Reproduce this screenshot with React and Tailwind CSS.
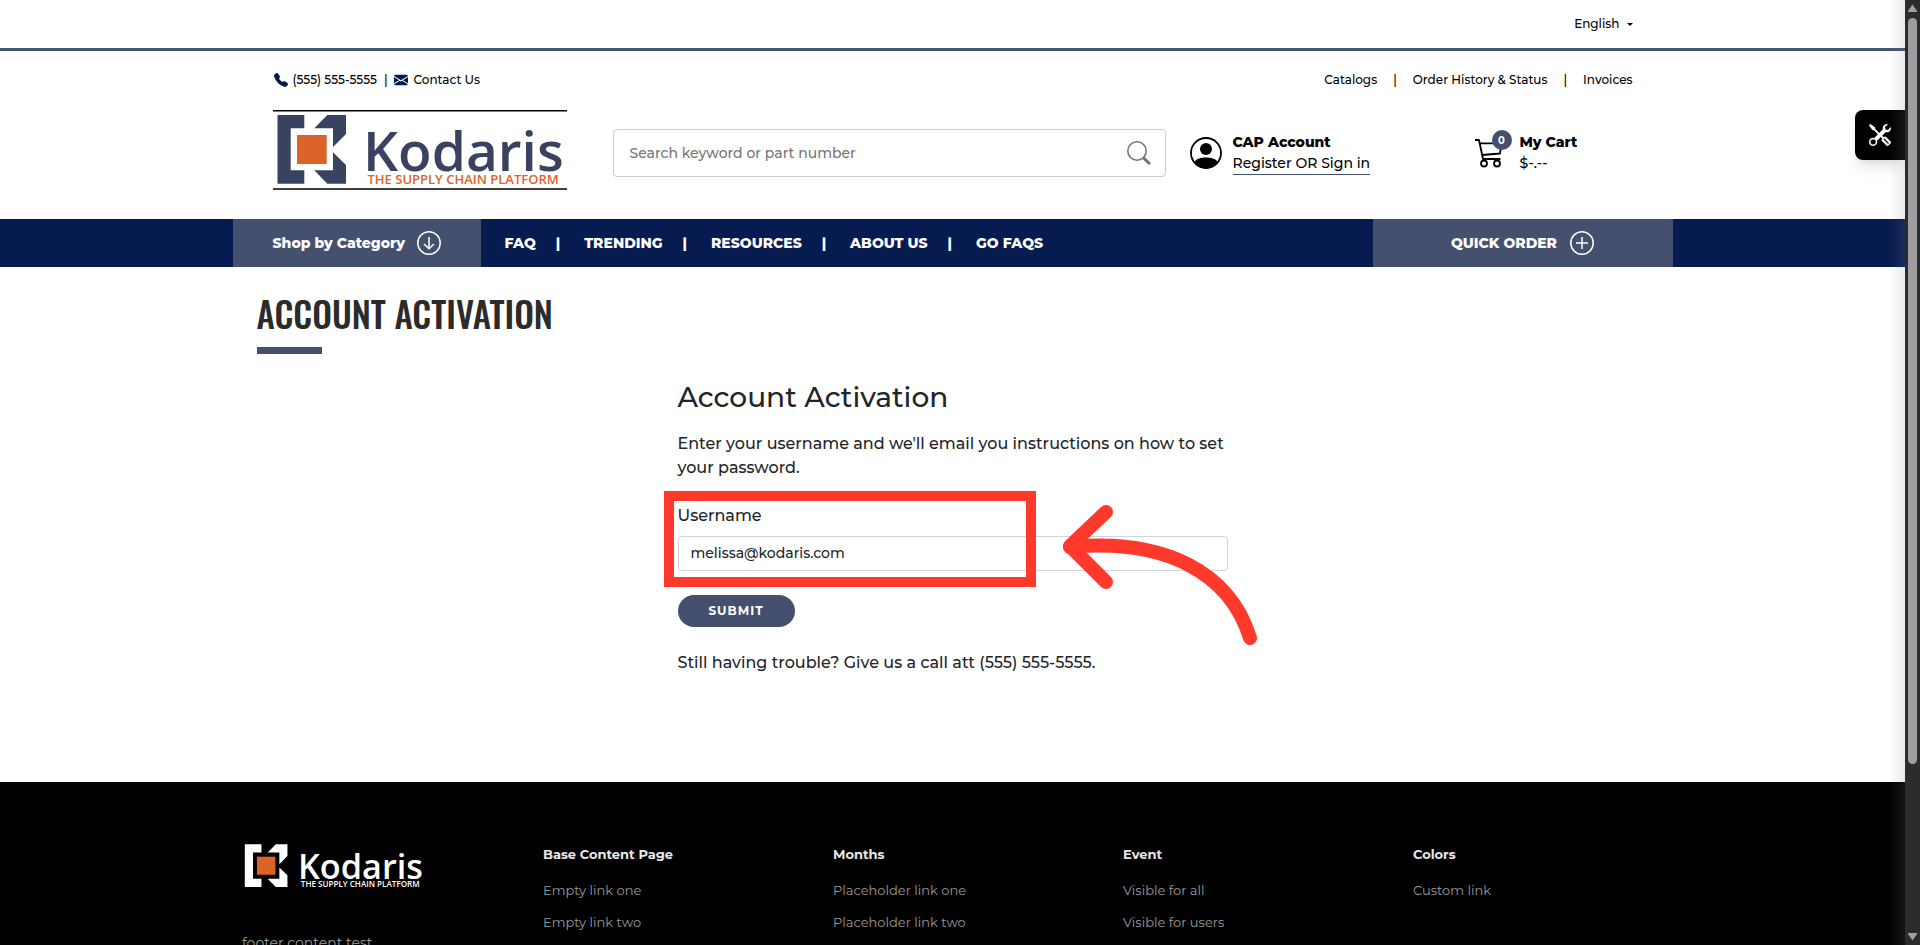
import { Fragment } from "react";
import { BsEnvelopeFill, BsTelephoneFill, BsTools } from "react-icons/bs";

const NAV_LINKS = ["FAQ", "TRENDING", "RESOURCES", "ABOUT US", "GO FAQS"];
const ACCOUNT_LINKS = ["Catalogs", "Order History & Status", "Invoices"];
const FOOTER_COLUMNS = [
  { title: "Base Content Page", links: ["Empty link one", "Empty link two"] },
  { title: "Months", links: ["Placeholder link one", "Placeholder link two"] },
  { title: "Event", links: ["Visible for all", "Visible for users"] },
  { title: "Colors", links: ["Custom link"] },
];

function Logo({ className, markClass, taglineClass, framed }) {
  return (
    <svg viewBox="0 0 294 80" className={className} role="img" aria-label="Kodaris">
      {framed && <path d="M0 0H294V1.4H0ZM0 78.3H294V79.8H0Z" className="fill-black" />}
      <g className={markClass}>
        <path d="M4.5 5H31.3V18.3H17.7V60.3H31.3V73.7H4.5Z" />
        <path d="M41.3 18.3L54.3 5H73V24L60 37V18.3Z" />
        <path d="M41.3 60.3L54.3 73.7H73V55L60 42.3V60.3Z" />
        <text x="90" y="60.5" fontSize="55" className="font-['Open_Sans'] font-semibold">
          Kodaris
        </text>
      </g>
      <rect x="24" y="25" width="29.7" height="29" className="fill-[#dc6428]" />
      <text x="94.5" y="73.7" fontSize="13" className={`font-['Open_Sans'] font-semibold ${taglineClass}`}>
        THE SUPPLY CHAIN PLATFORM
      </text>
    </svg>
  );
}

function CircleIcon({ children }) {
  return (
    <svg viewBox="0 0 24 24" className="size-6 fill-none stroke-white" strokeWidth="1.5" aria-hidden="true">
      <circle cx="12" cy="12" r="11.2" />
      {children}
    </svg>
  );
}

function TopBar() {
  return (
    <div className="border-b-3 border-[#435476]">
      <div className="mx-auto flex h-12 max-w-[1440px] items-center justify-end px-10">
        <button type="button" className="flex items-center gap-[7px] text-xs">
          English
          <svg viewBox="0 0 6 3" className="h-[3px] w-1.5 fill-black" aria-hidden="true">
            <path d="M0 0H6L3 3Z" />
          </svg>
        </button>
      </div>
    </div>
  );
}

function Header() {
  return (
    <header>
      <TopBar />
      <div className="mx-auto max-w-[1440px] px-10 pb-[29px]">
        <div className="flex h-[59px] items-center justify-between pb-px text-xs">
          <div className="flex items-center gap-[7px] pl-px">
            <a href="#phone" className="flex items-center gap-[5px]">
              <BsTelephoneFill className="size-[14px] text-[#051a4f]" />
              (555) 555-5555
            </a>
            <span>|</span>
            <a href="#contact" className="flex items-center gap-[5px]">
              <BsEnvelopeFill className="size-[14px] text-[#051a4f]" />
              Contact Us
            </a>
          </div>
          <nav className="flex items-center gap-4">
            {ACCOUNT_LINKS.map((link, i) => (
              <Fragment key={link}>
                {i > 0 && <span>|</span>}
                <a href="#account">{link}</a>
              </Fragment>
            ))}
          </nav>
        </div>

        <div className="flex items-center">
          <a href="#home" className="mr-[46px] block h-20 w-[294px]">
            <Logo className="h-20 w-full" markClass="fill-[#384362]" taglineClass="fill-[#dc6428]" framed />
          </a>
          <div className="flex flex-1 items-center pt-[6px]">
            <form className="mr-6 flex h-12 flex-1 items-center rounded border border-[#ccc] pr-[14px] pl-4">
              <input
                type="search"
                aria-label="Search"
                placeholder="Search keyword or part number"
                className="min-w-0 flex-1 text-sm outline-none placeholder:text-[#757575]"
              />
              <button type="submit" aria-label="Search">
                <svg viewBox="0 0 24 24" className="size-6 fill-none stroke-[#757575]" aria-hidden="true">
                  <circle cx="10" cy="10" r="9.2" strokeWidth="1.6" />
                  <path d="M16.5 16.8L23 23" strokeWidth="3" />
                </svg>
              </button>
            </form>

            <div className="flex w-[284px] items-center gap-[11px]">
              <svg viewBox="0 0 32 32" className="size-8" aria-hidden="true">
                <circle cx="16" cy="16" r="15" className="fill-none stroke-black" strokeWidth="1.8" />
                <circle cx="16" cy="12" r="6" />
                <path d="M4.5 24.5C8 19 24 19 27.5 24.5C25 29 21 31.5 16 31.5S7 29 4.5 24.5Z" />
              </svg>
              <div className="text-sm leading-[21px]">
                <div className="font-extrabold">CAP Account</div>
                <a href="#signin" className="block border-b border-[#435174]">
                  Register OR Sign in
                </a>
              </div>
            </div>

            <a href="#cart" className="flex w-[159px] items-center gap-4">
              <span className="relative">
                <svg
                  viewBox="0 0 30 30"
                  className="size-[30px] fill-none stroke-black"
                  strokeWidth="1.8"
                  strokeLinejoin="round"
                  aria-hidden="true"
                >
                  <path d="M1 2H5L9 21H26.5M6 5.3H27.5L26 15.5L8.2 17" />
                  <circle cx="10" cy="25.5" r="3" />
                  <circle cx="23" cy="25.5" r="3" />
                </svg>
                <span className="absolute -top-2 left-[18px] flex size-5 items-center justify-center rounded-full bg-[#45506f] text-[10px] font-bold text-white">
                  0
                </span>
              </span>
              <span className="text-sm leading-[21px]">
                <span className="block font-extrabold">My Cart</span>
                <span className="block">$-.--</span>
              </span>
            </a>
          </div>
        </div>
      </div>

      <div className="bg-[#061b4f]">
        <div className="mx-auto flex h-12 max-w-[1440px] items-center text-sm font-extrabold text-white">
          <button type="button" className="flex h-full w-[248px] items-center gap-3 bg-[#45506f] pl-10">
            Shop by Category
            <CircleIcon>
              <path d="M12 6V17.5M7 13L12 17.8L17 13" />
            </CircleIcon>
          </button>
          <nav className="flex items-center gap-5 pl-6">
            {NAV_LINKS.map((link, i) => (
              <Fragment key={link}>
                {i > 0 && <span className="pr-1">|</span>}
                <a href="#nav">{link}</a>
              </Fragment>
            ))}
          </nav>
          <button
            type="button"
            className="ml-auto flex h-full w-[300px] items-center justify-center gap-[13px] bg-[#45506f]"
          >
            QUICK ORDER
            <CircleIcon>
              <path d="M12 6V18M6 12H18" />
            </CircleIcon>
          </button>
        </div>
      </div>
    </header>
  );
}

function ActivationForm() {
  return (
    <form className="relative mx-auto max-w-[550px]">
      <h2 className="text-[28px] leading-[34px]">Account Activation</h2>
      <p className="mt-[18px] leading-6">
        Enter your username and we'll email you instructions on how to set your password.
      </p>
      <label htmlFor="username" className="mt-6 block leading-6">
        Username
      </label>
      <input
        id="username"
        type="text"
        defaultValue="melissa@kodaris.com"
        className="mt-2 block h-[35px] w-full rounded border border-[#ced4da] px-3 pb-px text-sm outline-none"
      />
      <button
        type="submit"
        className="mt-6 block h-8 w-[117px] rounded-full bg-[#45506f] text-xs font-bold tracking-[1px] text-white"
      >
        SUBMIT
      </button>
      <p className="mt-6 leading-6">Still having trouble? Give us a call att (555) 555-5555.</p>

      <div className="pointer-events-none absolute top-[111px] -left-[14px] h-24 w-[372px] border-10 border-[#ff392b]" />
      <svg
        viewBox="0 0 200 150"
        className="pointer-events-none absolute top-[121px] left-[382px] h-[150px] w-[200px] fill-none stroke-[#ff392b]"
        strokeWidth="14"
        strokeLinecap="round"
        strokeLinejoin="round"
        aria-hidden="true"
      >
        <path d="M46 11L10 45L46 81" />
        <path d="M10 46C106 37 170 72 190 137" />
      </svg>
    </form>
  );
}

function Footer() {
  return (
    <footer className="flex-1 bg-black text-[13px] font-normal text-[#9a9a9a]">
      <div className="mx-auto grid max-w-[1421px] grid-cols-[261px_repeat(4,1fr)] gap-x-10 pt-[59px]">
        <div>
          <Logo className="h-[50px] w-[183px]" markClass="fill-white" taglineClass="fill-white" />
          <p className="mt-[42px] text-sm leading-5">footer content test</p>
        </div>
        {FOOTER_COLUMNS.map((column) => (
          <div key={column.title} className="leading-5">
            <h3 className="mt-[3px] font-bold text-[#e8e8e8]">{column.title}</h3>
            <ul className="mt-4 flex flex-col gap-3">
              {column.links.map((link) => (
                <li key={link}>
                  <a href="#footer">{link}</a>
                </li>
              ))}
            </ul>
          </div>
        ))}
      </div>
    </footer>
  );
}

function Scrollbar() {
  return (
    <div className="flex w-[15px] shrink-0 flex-col items-center bg-[#2c2c2c] py-1" aria-hidden="true">
      <svg viewBox="0 0 9 8" className="h-2 w-[9px] fill-[#9f9f9f]">
        <path d="M4.5 0.5L9 7V8H0V7Z" />
      </svg>
      <div className="mt-[6px] flex w-[9px] flex-1 flex-col">
        <div className="h-[81.5%] rounded-full bg-[#9f9f9f]" />
      </div>
      <svg viewBox="0 0 9 8" className="h-2 w-[9px] fill-[#9f9f9f]">
        <path d="M4.5 7.5L9 1V0H0V1Z" />
      </svg>
    </div>
  );
}

export default function App() {
  return (
    <div className="flex h-screen bg-white font-['Montserrat',sans-serif] font-medium text-black">
      <div className="relative flex min-w-0 flex-1 flex-col overflow-hidden">
        <Header />
        <main className="pb-[107px] text-[#212529]">
          <div className="mx-auto max-w-[1392px] pt-[19px]">
            <h1 className="font-['Oswald',sans-serif] text-[35px] leading-[54px] font-medium text-[#2b2b2b]">
              ACCOUNT ACTIVATION
            </h1>
            <div className="mt-[7px] mb-[26px] h-[7px] w-[65px] bg-[#45506f]" />
          </div>
          <ActivationForm />
        </main>
        <Footer />
        <button
          type="button"
          aria-label="Tools"
          className="absolute top-[110px] right-0 flex size-[50px] items-center justify-center rounded-l-lg bg-black text-white shadow-lg"
        >
          <BsTools className="size-[22px]" />
        </button>
        <div className="pointer-events-none absolute inset-y-0 right-0 w-4 bg-linear-to-r from-transparent to-[#80808028]" />
      </div>
      <Scrollbar />
    </div>
  );
}
